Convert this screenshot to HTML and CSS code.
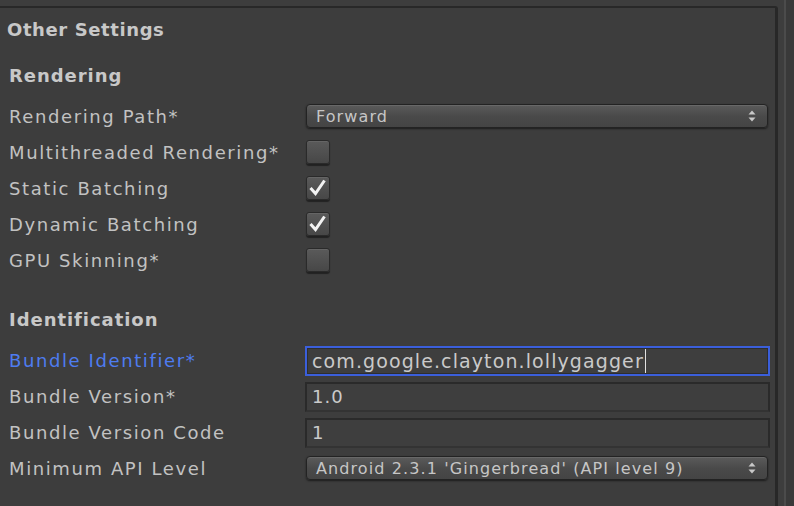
FILE: index.html
```html
<!DOCTYPE html>
<html>
<head>
<meta charset="utf-8">
<link rel="stylesheet" href="styles.css">
</head>
<body>
<div class="page">
  <div class="panel">
    <div class="title">Other Settings</div>
    <div class="section">
      <div class="header">Rendering</div>
      <div class="row">
        <div class="label">Rendering Path*</div>
        <div class="control">
          <div class="popup"><span>Forward</span>
            <svg class="arrows" width="8" height="12" viewBox="0 0 8 12"><path d="M4 0.5 L7.5 4.5 L0.5 4.5 Z M4 11.5 L7.5 7.5 L0.5 7.5 Z" fill="#c8c8c8"/></svg>
          </div>
        </div>
      </div>
      <div class="row">
        <div class="label">Multithreaded Rendering*</div>
        <div class="control"><div class="check"></div></div>
      </div>
      <div class="row">
        <div class="label">Static Batching</div>
        <div class="control"><div class="check"><svg width="24" height="24" viewBox="0 0 24 24"><path d="M4.5 12 L9.5 17.5 L18.5 4.5" fill="none" stroke="#f2f2f2" stroke-width="3" stroke-linejoin="miter"/></svg></div></div>
      </div>
      <div class="row">
        <div class="label">Dynamic Batching</div>
        <div class="control"><div class="check"><svg width="24" height="24" viewBox="0 0 24 24"><path d="M4.5 12 L9.5 17.5 L18.5 4.5" fill="none" stroke="#f2f2f2" stroke-width="3" stroke-linejoin="miter"/></svg></div></div>
      </div>
      <div class="row">
        <div class="label">GPU Skinning*</div>
        <div class="control"><div class="check"></div></div>
      </div>
    </div>
    <div class="section ident">
      <div class="header">Identification</div>
      <div class="row">
        <div class="label active">Bundle Identifier*</div>
        <div class="control"><div class="field focus">com.google.clayton.lollygagger<span class="caret"></span></div></div>
      </div>
      <div class="row">
        <div class="label">Bundle Version*</div>
        <div class="control"><div class="field">1.0</div></div>
      </div>
      <div class="row">
        <div class="label">Bundle Version Code</div>
        <div class="control"><div class="field">1</div></div>
      </div>
      <div class="row">
        <div class="label">Minimum API Level</div>
        <div class="control">
          <div class="popup"><span>Android 2.3.1 'Gingerbread' (API level 9)</span>
            <svg class="arrows" width="8" height="12" viewBox="0 0 8 12"><path d="M4 0.5 L7.5 4.5 L0.5 4.5 Z M4 11.5 L7.5 7.5 L0.5 7.5 Z" fill="#c8c8c8"/></svg>
          </div>
        </div>
      </div>
    </div>
  </div>
  <div class="gutter"></div>
  <div class="edge"></div>
</div>
</body>
</html>
```
FILE: styles.css
```css
html, body {
  margin: 0;
  padding: 0;
  background: #3d3d3d;
  height: 100%;
  overflow: hidden;
}
body {
  font-family: "DejaVu Sans", "Liberation Sans", sans-serif;
  color: #c4c4c4;
}
.page {
  display: flex;
  height: 506px;
}
.panel {
  width: 775px;
  margin-top: 6px;
  border-top: 2px solid #282828;
  border-right: 3px solid #282828;
  border-top-right-radius: 3px;
  padding-top: 4px;
  box-sizing: content-box;
}
.gutter {
  width: 6px;
}
.edge {
  width: 2px;
  background: #4b4b4b;
  flex: 0 0 2px;
}
.page::after {
  content: "";
  flex: 1;
  background: #393939;
}
.title {
  height: 36px;
  line-height: 36px;
  padding-left: 7px;
  font-weight: bold;
  font-size: 18px;
  letter-spacing: 0.6px;
  color: #c8c8c8;
}
.section {
  margin-top: 10px;
}
.section.ident {
  margin-top: 24px;
}
.header {
  height: 36px;
  line-height: 36px;
  padding-left: 9px;
  font-weight: bold;
  font-size: 18px;
  letter-spacing: 0.95px;
  color: #c8c8c8;
  margin-bottom: 4px;
}
.row {
  display: flex;
  align-items: center;
  height: 36px;
}
.label {
  width: 296px;
  padding-left: 9px;
  font-size: 18px;
  letter-spacing: 1.6px;
  color: #c2c2c2;
  white-space: nowrap;
}
.label.active {
  color: #4e7cf0;
}
.control {
  flex: 1;
  display: flex;
  align-items: center;
}
.popup {
  margin-left: 1px;
  width: 462px;
  height: 24px;
  border: 1px solid #232323;
  border-radius: 4px;
  background: linear-gradient(#5b5b5b, #4a4a4a 50%, #444444);
  box-shadow: inset 0 1px 0 #686868, 0 1px 2px rgba(0,0,0,0.55);
  display: flex;
  align-items: center;
  justify-content: space-between;
  padding: 0 11px 0 9px;
  box-sizing: border-box;
  font-size: 16px;
  letter-spacing: 1.1px;
  color: #c6c6c6;
}
.popup span {
  white-space: nowrap;
}
.arrows {
  display: block;
}
.check {
  margin-left: 1px;
  width: 24px;
  height: 24px;
  border-radius: 3px;
  border: 1px solid #2a2a2a;
  box-sizing: border-box;
  background: linear-gradient(#5a5a5a, #474747);
  box-shadow: inset 0 1px 0 #656565, 0 2px 1px rgba(0,0,0,0.45);
  position: relative;
}
.check svg {
  position: absolute;
  left: -1px;
  top: -1px;
}
.field {
  width: 465px;
  height: 30px;
  box-sizing: border-box;
  border: 2px solid #2a2a2a;
  border-bottom-color: #333333;
  background: #3e3e3e;
  font-size: 18px;
  letter-spacing: 1.1px;
  color: #cacaca;
  padding-left: 5px;
  line-height: 26px;
  display: flex;
  align-items: center;
  margin-top: 1px;
}
.field.focus {
  border: 2px solid #3b5fdb;
  box-shadow: inset 0 0 0 1px #2e2e2e;
  font-size: 19px;
}
.caret {
  display: inline-block;
  width: 1px;
  height: 24px;
  background: #e0e0e0;
  margin-left: 1px;
}
```
